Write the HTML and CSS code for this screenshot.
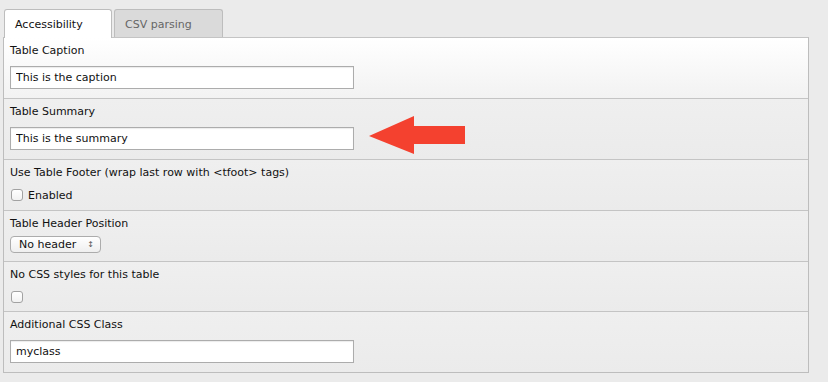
FILE: index.html
```html
<!DOCTYPE html>
<html lang="en">
<head>
  <meta charset="UTF-8" />
  <title>Table options</title>
  <link rel="stylesheet" href="styles.css">
</head>
<body>
  <div class="tabs">
    <div class="tab active">Accessibility</div>
    <div class="tab">CSV parsing</div>
  </div>

  <div class="panel">
    <div class="field first">
      <label>Table Caption</label>
      <input class="text" type="text" value="This is the caption" />
    </div>

    <div class="field">
      <label>Table Summary</label>
      <input class="text" type="text" value="This is the summary" />
      <!-- annotation arrow -->
      <svg class="arrow" width="100" height="40" viewBox="0 0 100 40">
        <polygon points="0,20 45,0 45,10 96,10 96,28 45,28 45,38" fill="#f4412f" />
      </svg>
    </div>

    <div class="field short">
      <label>Use Table Footer (wrap last row with &lt;tfoot&gt; tags)</label>
      <div class="check"><span class="box"></span>Enabled</div>
    </div>

    <div class="field short">
      <label>Table Header Position</label>
      <div class="select">No header <span class="updown">&#x2195;</span></div>
    </div>

    <div class="field short last-short">
      <label>No CSS styles for this table</label>
      <div class="check"><span class="box"></span></div>
    </div>

    <div class="field">
      <label>Additional CSS Class</label>
      <input class="text" type="text" value="myclass" />
    </div>
  </div>
</body>
</html>
```

FILE: styles.css
```css
body {
  margin: 0;
  padding: 9px 0 0 3px;
  background: #ebebeb;
  font-family: 'DejaVu Sans', Verdana, sans-serif;
  font-size: 11px;
  color: #111;
}

.tabs {
  display: flex;
  gap: 2px;
  margin-left: 1px;
  height: 28px;
}

.tab {
  box-sizing: border-box;
  height: 28px;
  padding: 8px 0 0 10px;
  border: 1px solid #bdbdbd;
  border-bottom: none;
  border-radius: 3px 3px 0 0;
  background: #dadada;
  color: #666;
  width: 109px;
}

.tab.active {
  background: #fff;
  color: #111;
  width: 108px;
  height: 29px;
  position: relative;
  z-index: 2;
}

.panel {
  width: 806px;
  box-sizing: border-box;
  border: 1px solid #bdbdbd;
  border-top: 1px solid #c4c4c4;
}

.field {
  position: relative;
  height: 60px;
  box-sizing: border-box;
  padding: 5px 6px 0 6px;
  border-top: 1px solid #c4c4c4;
  background: linear-gradient(#efefef, #ebebeb);
}

.field.first {
  border-top: none;
  background: linear-gradient(#fff, #f2f2f2);
}

.field.short {
  height: 51px;
}

.field.last-short {
  height: 50px;
}

.field.first + .field {
  height: 61px;
}

.panel .field:last-child {
  height: 61px;
}

.field label {
  display: block;
  line-height: 16px;
}

.text {
  display: block;
  box-sizing: border-box;
  width: 344px;
  height: 23px;
  margin: 7px 0 0 0;
  padding: 0 5px;
  border: 1px solid #acacac;
  box-shadow: inset 0 1px 1px rgba(0, 0, 0, 0.08);
  background: #fff;
  font-family: 'DejaVu Sans', Verdana, sans-serif;
  font-size: 11px;
  color: #111;
  outline: none;
}

.check {
  display: flex;
  align-items: center;
  height: 12px;
  margin-top: 8px;
  padding-left: 1px;
}

.box {
  box-sizing: border-box;
  width: 12px;
  height: 12px;
  border: 1px solid #a2a2a2;
  border-radius: 3px;
  background: linear-gradient(#fff, #f2f2f2);
  margin-right: 5px;
}

.select {
  box-sizing: border-box;
  width: 91px;
  height: 17px;
  margin-top: 4px;
  padding: 1px 0 0 8px;
  border: 1px solid #acacac;
  border-radius: 4px;
  background: linear-gradient(#fff, #efefef);
  line-height: 14px;
  position: relative;
}

.updown {
  position: absolute;
  right: 6px;
  top: 1px;
  font-size: 8px;
  color: #555;
}

.arrow {
  position: absolute;
  left: 365px;
  top: 17px;
}
```
